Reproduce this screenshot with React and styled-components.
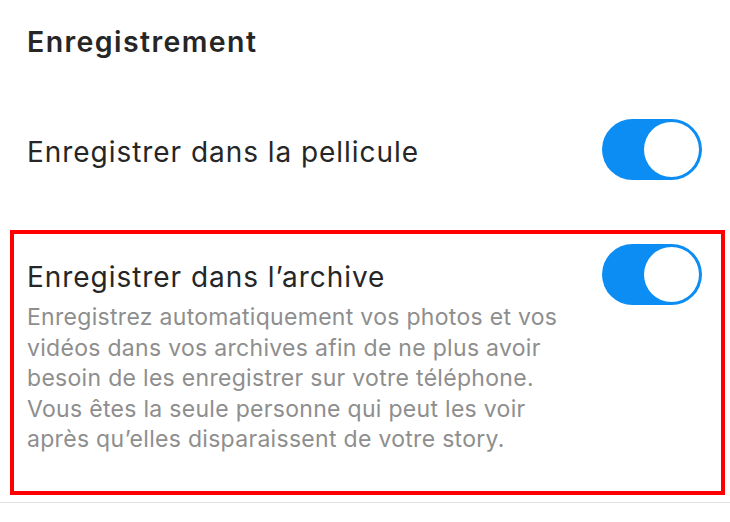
import React from 'react';
import styled, { createGlobalStyle } from 'styled-components';

const GlobalStyle = createGlobalStyle`
  html, body {
    margin: 0;
    padding: 0;
    background: #ffffff;
  }
  body {
    font-family: Inter, "Noto Sans", "Liberation Sans", sans-serif;
    -webkit-font-smoothing: antialiased;
  }
`;

const Page = styled.div`
  width: 730px;
  height: 522px;
  box-sizing: border-box;
  padding: 25px 5px 0 10px;
  background: #ffffff;
  overflow: hidden;
`;

const Heading = styled.h2`
  margin: 0 0 56px;
  padding: 0 19px 0 17px;
  font-size: 28.5px;
  line-height: 34px;
  font-weight: 600;
  color: #262626;
  letter-spacing: 1.4px;
`;

const Section = styled.section`
  display: grid;
  grid-template-columns: 1fr auto;
  align-items: center;
  border: 4px solid ${(p) => (p.$highlight ? '#ff0000' : 'transparent')};
  padding: ${(p) => (p.$highlight ? '10px 19px 36px 13px' : '0 19px 0 13px')};
  margin-bottom: ${(p) => (p.$highlight ? '7px' : '46px')};
`;

const Title = styled.div`
  padding-top: 4px;
  font-size: 28px;
  line-height: 34px;
  font-weight: 400;
  color: #262626;
  letter-spacing: 0.95px;
`;

const Description = styled.p`
  grid-column: 1 / 2;
  margin: -2.6px 0 0;
  font-size: 23px;
  line-height: 30.5px;
  color: #8e8e8e;
  letter-spacing: 0.3px;
`;

const Line = styled.span`
  display: block;
  white-space: nowrap;
`;

const Toggle = styled.div`
  display: flex;
  justify-content: ${(p) => (p.$on ? 'flex-end' : 'flex-start')};
  align-items: center;
  box-sizing: border-box;
  width: 100px;
  height: 61px;
  padding: 3px;
  border-radius: 31px;
  background: ${(p) => (p.$on ? '#0b8df4' : '#e5e5ea')};
`;

const Knob = styled.div`
  width: 55px;
  height: 55px;
  border-radius: 50%;
  background: #ffffff;
`;

const Divider = styled.hr`
  margin: 0 -5px 0 -10px;
  border: 0;
  border-top: 1px solid #e3e3e3;
`;

const archiveLines = [
  'Enregistrez automatiquement vos photos et vos',
  'vidéos dans vos archives afin de ne plus avoir',
  'besoin de les enregistrer sur votre téléphone.',
  'Vous êtes la seule personne qui peut les voir',
  'après qu’elles disparaissent de votre story.',
];

function Switch({ on }) {
  return (
    <Toggle $on={on}>
      <Knob />
    </Toggle>
  );
}

export default function App() {
  return (
    <>
      <GlobalStyle />
      <Page>
        <Heading>Enregistrement</Heading>
        <Section>
          <Title>Enregistrer dans la pellicule</Title>
          <Switch on />
        </Section>
        <Section $highlight>
          <Title>Enregistrer dans l’archive</Title>
          <Switch on />
          <Description>
            {archiveLines.map((l) => (
              <Line key={l}>{l}</Line>
            ))}
          </Description>
        </Section>
        <Divider />
      </Page>
    </>
  );
}
